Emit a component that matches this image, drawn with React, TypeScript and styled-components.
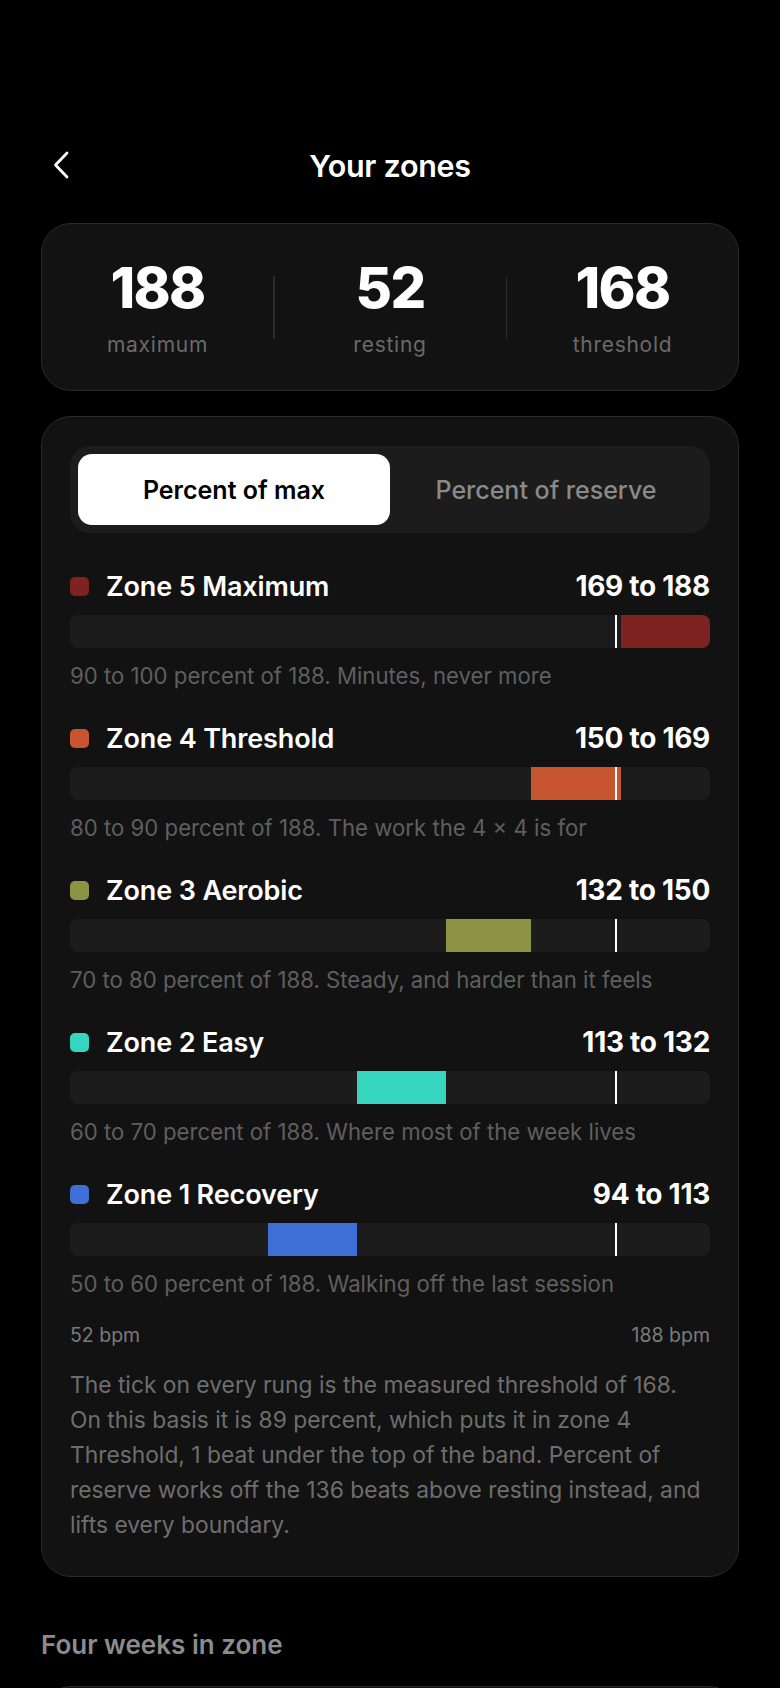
import React, { useState } from "react";
import styled, { createGlobalStyle } from "styled-components";

const GlobalStyle = createGlobalStyle`
  html, body {
    margin: 0;
    padding: 0;
    background: #000;
  }
  body {
    font-family: Inter, "Noto Sans", "Liberation Sans", sans-serif;
    color: #fff;
    -webkit-font-smoothing: antialiased;
  }
  * {
    box-sizing: border-box;
  }
`;

const REST = 52;
const MAX = 188;
const THRESHOLD = 168;

type Zone = {
  name: string;
  from: number;
  to: number;
  color: string;
  note: string;
};

const zones: Zone[] = [
  {
    name: "Zone 5 Maximum",
    from: 169,
    to: 188,
    color: "#7e2322",
    note: "90 to 100 percent of 188. Minutes, never more",
  },
  {
    name: "Zone 4 Threshold",
    from: 150,
    to: 169,
    color: "#c75630",
    note: "80 to 90 percent of 188. The work the 4 × 4 is for",
  },
  {
    name: "Zone 3 Aerobic",
    from: 132,
    to: 150,
    color: "#8c9443",
    note: "70 to 80 percent of 188. Steady, and harder than it feels",
  },
  {
    name: "Zone 2 Easy",
    from: 113,
    to: 132,
    color: "#36d5bf",
    note: "60 to 70 percent of 188. Where most of the week lives",
  },
  {
    name: "Zone 1 Recovery",
    from: 94,
    to: 113,
    color: "#3e6fd7",
    note: "50 to 60 percent of 188. Walking off the last session",
  },
];

const Page = styled.div`
  width: 780px;
  padding: 137px 41px 0;
  display: flex;
  flex-direction: column;
`;

const Header = styled.header`
  display: grid;
  grid-template-columns: 56px 1fr 56px;
  align-items: center;
  height: 56px;
`;

const BackButton = styled.button`
  background: none;
  border: none;
  padding: 0 0 0 12px;
  height: 44px;
  display: flex;
  align-items: center;
  color: #fff;
  cursor: pointer;
`;

const Title = styled.h1`
  margin: 0;
  text-align: center;
  font-size: 30.5px;
  font-weight: 600;
  letter-spacing: -0.01em;
  color: #fff;
`;

const Card = styled.section`
  background: #121212;
  border: 1.5px solid #2a2a2a;
  border-radius: 30px;
`;

const StatsCard = styled(Card)`
  margin-top: 30px;
  height: 168px;
  display: grid;
  grid-template-columns: 1fr auto 1fr auto 1fr;
  align-items: center;
`;

const Stat = styled.div`
  display: flex;
  flex-direction: column;
  align-items: center;
`;

const StatValue = styled.div`
  font-size: 56px;
  line-height: 62px;
  font-weight: 800;
  letter-spacing: -0.03em;
  color: #fff;
`;

const StatLabel = styled.div`
  margin-top: 14px;
  font-size: 21px;
  line-height: 24px;
  letter-spacing: 0.035em;
  color: #6a6a6a;
`;

const Divider = styled.div`
  width: 1.5px;
  height: 63px;
  background: #2c2c2c;
`;

const ZonesCard = styled(Card)`
  margin-top: 25px;
  padding: 29px 28px 34px;
  display: flex;
  flex-direction: column;
`;

const Segmented = styled.div`
  display: grid;
  grid-template-columns: 1fr 1fr;
  padding: 8px;
  height: 87px;
  border-radius: 20px;
  background: #1c1c1c;
  margin-bottom: 38px;
`;

const Segment = styled.button<{ $active: boolean }>`
  border: none;
  border-radius: 14px;
  font-family: inherit;
  font-size: 25px;
  font-weight: ${(p) => (p.$active ? 600 : 500)};
  color: ${(p) => (p.$active ? "#000" : "#8a8a8a")};
  background: ${(p) => (p.$active ? "#fff" : "transparent")};
  cursor: pointer;
`;

const ZoneList = styled.div`
  display: flex;
  flex-direction: column;
  gap: 32px;
  margin-bottom: 24px;
`;

const ZoneBlock = styled.div`
  display: flex;
  flex-direction: column;
`;

const ZoneHead = styled.div`
  display: flex;
  align-items: center;
  height: 30px;
`;

const Swatch = styled.span<{ $color: string }>`
  width: 19px;
  height: 19px;
  border-radius: 5px;
  background: ${(p) => p.$color};
  margin-right: 17px;
  flex-shrink: 0;
`;

const ZoneName = styled.div`
  flex: 1;
  font-size: 27px;
  font-weight: 600;
  color: #fff;
  letter-spacing: -0.005em;
`;

const ZoneRange = styled.div`
  font-size: 28px;
  font-weight: 700;
  color: #fff;
  letter-spacing: -0.01em;
`;

const Track = styled.div`
  position: relative;
  margin-top: 14px;
  height: 33px;
  border-radius: 8px;
  background: #1c1c1c;
  overflow: hidden;
`;

const Fill = styled.div<{ $color: string }>`
  position: absolute;
  top: 0;
  bottom: 0;
  background: ${(p) => p.$color};
`;

const Tick = styled.div`
  position: absolute;
  top: 0;
  bottom: 0;
  width: 2.5px;
  margin-left: -1px;
  background: #fff;
`;

const ZoneNote = styled.div`
  margin-top: 13px;
  font-size: 22.2px;
  line-height: 30px;
  color: #5f5f5f;
`;

const Scale = styled.div`
  display: flex;
  justify-content: space-between;
  font-size: 19.5px;
  line-height: 24px;
  color: #7a7a7a;
`;

const Explainer = styled.p`
  margin: 20px 0 0;
  font-size: 22.8px;
  line-height: 35px;
  color: #6e6e6e;
`;

const SectionTitle = styled.h2`
  margin: 53px 0 0;
  font-size: 26px;
  line-height: 30px;
  font-weight: 600;
  color: #8c8c8c;
`;

const NextCard = styled(Card)`
  margin-top: 26px;
  height: 200px;
`;

const pct = (v: number) => ((v - REST) / (MAX - REST)) * 100;

const ChevronLeft = () => (
  <svg width="16" height="28" viewBox="0 0 16 28" fill="none">
    <path
      d="M14 2 L2.5 14 L14 26"
      stroke="#fff"
      strokeWidth="2.8"
      strokeLinecap="round"
      strokeLinejoin="round"
    />
  </svg>
);

const ZoneRow = ({ zone }: { zone: Zone }) => {
  const left = pct(zone.from);
  const width = pct(zone.to) - left;
  return (
    <ZoneBlock>
      <ZoneHead>
        <Swatch $color={zone.color} />
        <ZoneName>{zone.name}</ZoneName>
        <ZoneRange>
          {zone.from} to {zone.to}
        </ZoneRange>
      </ZoneHead>
      <Track>
        <Fill $color={zone.color} style={{ left: `${left}%`, width: `${width}%` }} />
        <Tick style={{ left: `${pct(THRESHOLD)}%` }} />
      </Track>
      <ZoneNote>{zone.note}</ZoneNote>
    </ZoneBlock>
  );
};

const App = () => {
  const [mode, setMode] = useState<"max" | "reserve">("max");
  return (
    <Page>
      <GlobalStyle />
      <Header>
        <BackButton aria-label="Back">
          <ChevronLeft />
        </BackButton>
        <Title>Your zones</Title>
        <span />
      </Header>

      <StatsCard>
        <Stat>
          <StatValue>188</StatValue>
          <StatLabel>maximum</StatLabel>
        </Stat>
        <Divider />
        <Stat>
          <StatValue>52</StatValue>
          <StatLabel>resting</StatLabel>
        </Stat>
        <Divider />
        <Stat>
          <StatValue>168</StatValue>
          <StatLabel>threshold</StatLabel>
        </Stat>
      </StatsCard>

      <ZonesCard>
        <Segmented>
          <Segment $active={mode === "max"} onClick={() => setMode("max")}>
            Percent of max
          </Segment>
          <Segment $active={mode === "reserve"} onClick={() => setMode("reserve")}>
            Percent of reserve
          </Segment>
        </Segmented>
        <ZoneList>
          {zones.map((z) => (
            <ZoneRow key={z.name} zone={z} />
          ))}
        </ZoneList>
        <Scale>
          <span>52 bpm</span>
          <span>188 bpm</span>
        </Scale>
        <Explainer>
          The tick on every rung is the measured threshold of 168. On this basis it is 89
          percent, which puts it in zone 4 Threshold, 1 beat under the top of the band.
          Percent of reserve works off the 136 beats above resting instead, and lifts every
          boundary.
        </Explainer>
      </ZonesCard>

      <SectionTitle>Four weeks in zone</SectionTitle>
      <NextCard />
    </Page>
  );
};

export default App;
